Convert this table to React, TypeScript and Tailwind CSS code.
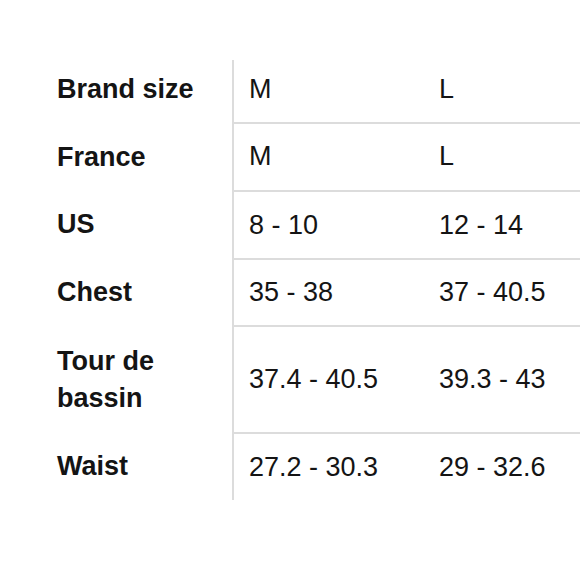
import React from "react";

const rows: { label: string; a: string; b: string; h: string; pb: string; vb: string }[] = [
  { label: "Brand size", a: "M", b: "L", h: "h-[64px]", pb: "pb-[5px]", vb: "pb-[4px]" },
  { label: "France", a: "M", b: "L", h: "h-[68px]", pb: "pb-[2px]", vb: "pb-[1px]" },
  { label: "US", a: "8 - 10", b: "12 - 14", h: "h-[68px]", pb: "pb-[3px]", vb: "pb-0" },
  { label: "Chest", a: "35 - 38", b: "37 - 40.5", h: "h-[67px]", pb: "pb-[2px]", vb: "pb-0" },
  { label: "Tour de bassin", a: "37.4 - 40.5", b: "39.3 - 43", h: "h-[107px]", pb: "pb-[2px]", vb: "pb-[1px]" },
  { label: "Waist", a: "27.2 - 30.3", b: "29 - 32.6", h: "h-[66px]", pb: "pb-[2px]", vb: "pb-0" },
];

export default function App() {
  return (
    <div
      className="w-[580px] h-[580px] bg-white overflow-hidden pt-[60px] text-[#141414]"
      style={{ fontFamily: '"Liberation Sans", Arial, sans-serif' }}
    >
      <div className="flex flex-col">
        {rows.map((r, i) => (
          <div key={i} className={`flex ${r.h}`}>
            <div
              className={`w-[175px] ml-[57px] flex items-center ${r.pb} text-[27px] font-bold leading-[37px]`}
            >
              {r.label}
            </div>
            <div
              className={`flex-1 flex items-center border-l-2 border-[#dcdcdc] ${
                i < rows.length - 1 ? "border-b-2" : ""
              } ${r.vb} text-[27px] leading-[37px]`}
            >
              <div className="w-[205px] pl-[15px] shrink-0">{r.a}</div>
              <div className="shrink-0 whitespace-nowrap">{r.b}</div>
            </div>
          </div>
        ))}
      </div>
    </div>
  );
}
